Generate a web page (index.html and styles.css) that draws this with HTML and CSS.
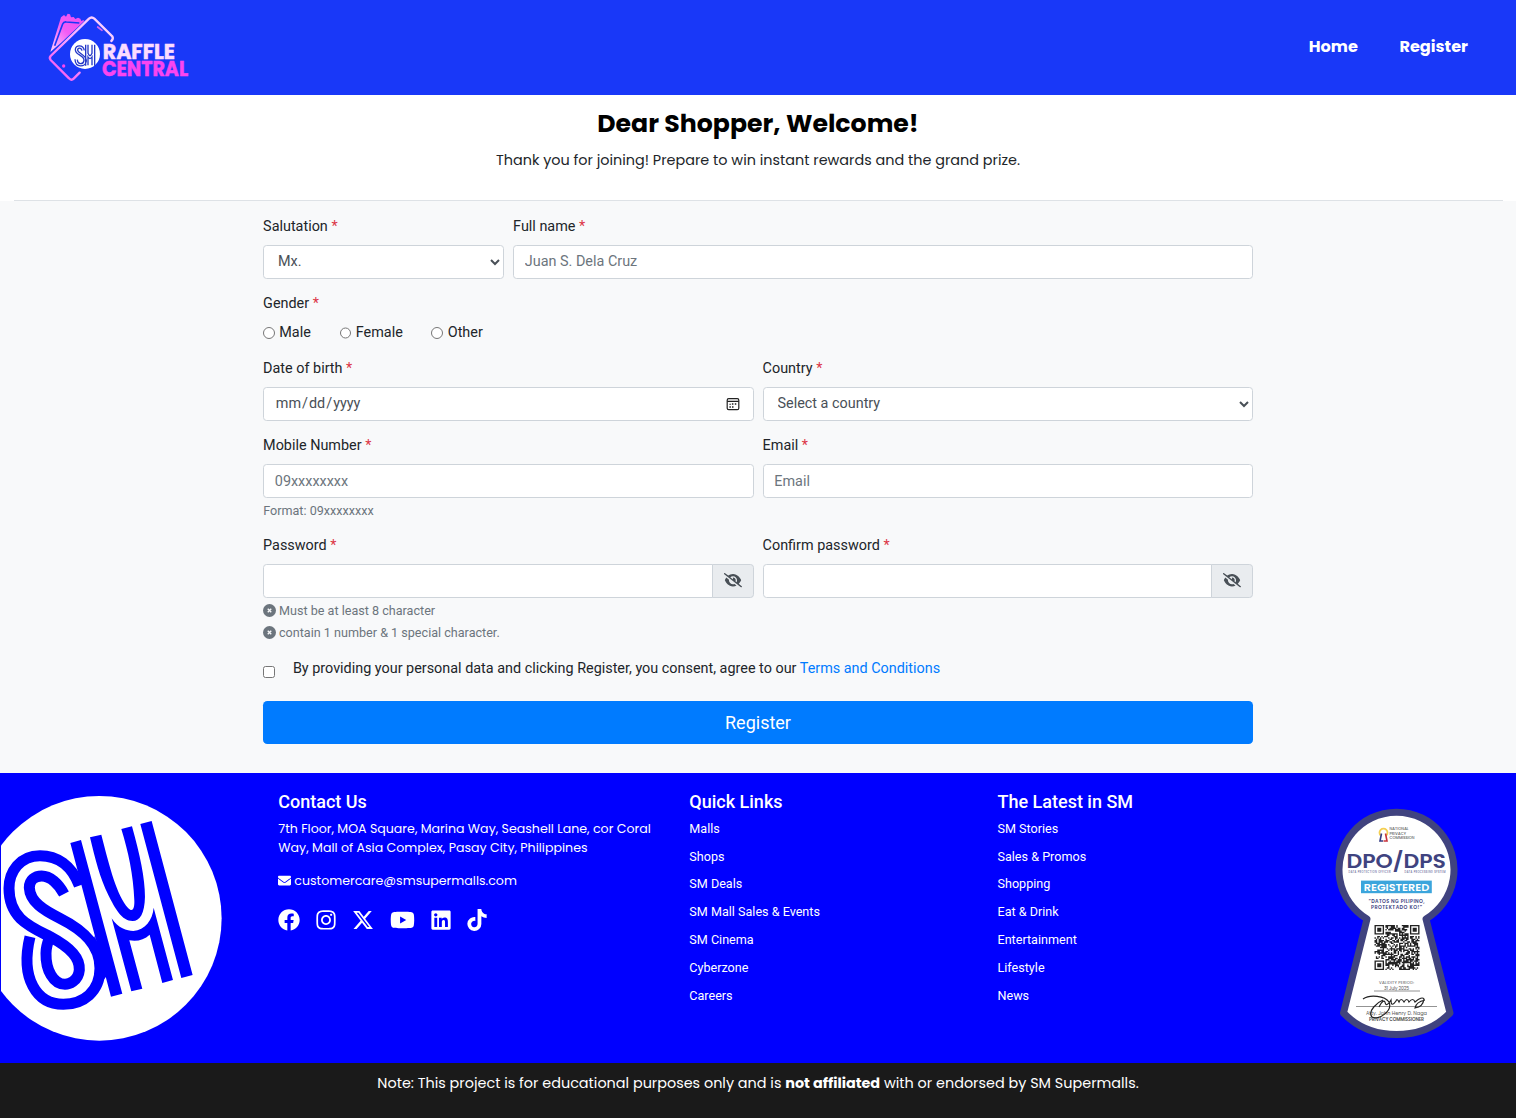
FILE: index.html
```html
<!DOCTYPE html>
<html lang="en">
<head>
<meta charset="utf-8">
<title>SM Raffle Central - Register</title>
<link rel="stylesheet" href="styles.css">
</head>
<body>
<svg class="defs" width="0" height="0">
  <symbol id="sm" viewBox="0 0 670 735">
    <g transform="translate(0 -33)">
      <path d="M211 174L243 165 367 626 333 635ZM421 117L455 108 578 570 544 579ZM270 157L304 149C330 250 350 330 385 370C400 385 404 365 403 345C400 270 385 200 364 132L396 124C420 210 435 280 435 335C434 385 420 408 398 408C365 408 345 370 325 330C300 280 285 220 270 157ZM335 400C355 430 380 438 400 438C435 435 458 405 461 368L519 585 487 594 449 449C432 465 412 470 388 466L427 611 394 619ZM284 452L318 575 300 600 280 470Z" fill="currentColor"/>
      <path d="M238 302C215 240 170 212 120 212C60 212 27 260 27 310C27 400 90 425 150 455C215 490 240 520 238 555C235 590 205 598 195 598C160 598 137 555 138 505C138 490 142 475 148 460M192 327C175 295 150 273 125 273C105 273 88 285 88 308C90 350 130 375 180 400C250 435 300 480 300 550C300 620 250 658 190 658C110 658 60 580 90 455" fill="none" stroke="currentColor" stroke-width="33"/>
    </g>
  </symbol>
  <symbol id="eye" viewBox="0 0 640 512"><path fill="currentColor" d="M38.800 5.100C28.400-3.100 13.300-1.200 5.100 9.200S-1.200 34.700 9.200 42.900l592 464c10.400 8.200 25.500 6.300 33.700-4.100s6.300-25.500-4.100-33.700L525.600 386.700c39.600-40.600 66.400-86.100 79.900-118.400c3.300-7.900 3.300-16.700 0-24.600c-14.900-35.700-46.200-87.700-93-131.100C465.500 68.800 400.800 32 320 32c-68.200 0-125 26.300-169.300 60.800L38.800 5.100zM223.100 149.500C248.600 126.200 282.700 112 320 112c79.500 0 144 64.500 144 144c0 24.900-6.300 48.300-17.400 68.700L408 294.500c8.400-19.300 10.600-41.400 4.800-63.300c-11.100-41.500-47.800-69.400-88.600-71.100c-5.800-.2-9.200 6.100-7.400 11.700c2.100 6.400 3.300 13.200 3.300 20.300c0 10.200-2.400 19.800-6.600 28.300l-90.300-70.800zM373 389.900c-16.400 6.500-34.300 10.100-53 10.100c-79.500 0-144-64.500-144-144c0-6.900 .5-13.600 1.400-20.200L83.100 161.500C60.300 191.200 44 220.800 34.500 243.700c-3.300 7.900-3.300 16.700 0 24.600c14.900 35.700 46.200 87.700 93 131.100C174.500 443.200 239.200 480 320 480c47.800 0 89.900-12.900 126.200-32.500L373 389.900z"/></symbol>
  <symbol id="cross" viewBox="0 0 26 26"><circle cx="13" cy="13" r="13" fill="currentColor"/><path d="M9.500 9.500l7 7m0-7l-7 7" stroke="#f8f9fa" stroke-width="2.800"/></symbol>
</svg>

<header class="header">
  <svg class="brand" viewBox="0 0 480 255" role="img" aria-label="SM Raffle Central">
    <defs><linearGradient id="pink" x1="0" y1="1" x2="1" y2="0"><stop offset="0" stop-color="#fa45f0"/><stop offset=".45" stop-color="#f7a3ff"/><stop offset="1" stop-color="#fbe0ff"/></linearGradient>
    <linearGradient id="hot" x1="0" y1="1" x2="1" y2="0"><stop offset="0" stop-color="#ffd0ff"/><stop offset=".5" stop-color="#f25cf5"/><stop offset="1" stop-color="#ee4df2"/></linearGradient></defs>
    <path d="M31 141L63 37l9-7 6 5 5-9 7 2 3 9 8-1 5 6 8-4 7 3 3 7 7-3 1 4L65 112Z" fill="url(#hot)"/>
    <path d="M44 122L68 57q3-7 11-6l39 3" fill="none" stroke="#1938f8" stroke-width="5"/>
    <path d="M119 203L101 221Q94 228 87 220L32 165Q27 159 32 153L147 41Q155 34 163 41L217 94Q221 102 214 108" fill="none" stroke="url(#pink)" stroke-width="7" stroke-linecap="round"/>
    <path d="M173 66l13 10" stroke="#d667ef" stroke-width="5" stroke-linecap="round"/><circle cx="71" cy="183" r="5" fill="#fa45f0"/>
    <circle cx="135" cy="147" r="45" fill="#fff"/>
    <g fill="none" stroke="#2438c8" stroke-width="4">
      <path d="M133 136C129 118 106 119 106 134C106 151 133 150 132 166C130 180 113 179 112 164M126 137C123 126 112 128 113 136C115 146 140 149 139 168C137 187 106 190 105 163M137 119v63M144 119v26q6 14 12 0v-26M144 181v-25q6 9 12 0v25M164 119v63"/>
    </g>
    <g class="brand-text"><text x="188" y="161" textLength="217" lengthAdjust="spacingAndGlyphs" fill="#fbdcff" stroke="#fbdcff">RAFFLE</text><text x="186" y="212" textLength="258" lengthAdjust="spacingAndGlyphs" fill="#fa45f0" stroke="#fa45f0">CENTRAL</text></g>
  </svg>
  <nav class="nav"><a href="#">Home</a><a href="#">Register</a></nav>
</header>

<section class="welcome">
  <h1>Dear Shopper, Welcome!</h1>
  <p>Thank you for joining! Prepare to win instant rewards and the grand prize.</p>
  <div class="rule"></div>
</section>

<main class="main">
  <form class="form">
    <div class="row salutation">
      <div class="group"><label>Salutation <b>*</b></label><select class="control"><option>Mx.</option></select></div>
      <div class="group"><label>Full name <b>*</b></label><input class="control" placeholder="Juan S. Dela Cruz"></div>
    </div>
    <div class="group"><label>Gender <b>*</b></label>
      <div class="radios">
        <span><input type="radio" name="g">Male</span><span><input type="radio" name="g">Female</span><span><input type="radio" name="g">Other</span>
      </div>
    </div>
    <div class="row">
      <div class="group"><label>Date of birth <b>*</b></label><input class="control" type="date"></div>
      <div class="group"><label>Country <b>*</b></label><select class="control"><option>Select a country</option></select></div>
    </div>
    <div class="row">
      <div class="group"><label>Mobile Number <b>*</b></label><input class="control low" placeholder="09xxxxxxxx"><small>Format: 09xxxxxxxx</small></div>
      <div class="group"><label>Email <b>*</b></label><input class="control low" placeholder="Email"></div>
    </div>
    <div class="row">
      <div class="group"><label>Password <b>*</b></label>
        <div class="input-group"><input class="control" type="password"><span class="addon"><svg><use href="#eye"/></svg></span></div>
        <div class="hints"><div><svg><use href="#cross"/></svg>Must be at least 8 character</div><div><svg><use href="#cross"/></svg>contain 1 number &amp; 1 special character.</div></div>
      </div>
      <div class="group"><label>Confirm password <b>*</b></label>
        <div class="input-group"><input class="control" type="password"><span class="addon"><svg><use href="#eye"/></svg></span></div>
      </div>
    </div>
    <div class="consent"><input type="checkbox"><span>By providing your personal data and clicking Register, you consent, agree to our <a href="#">Terms and Conditions</a></span></div>
    <button class="submit" type="button">Register</button>
  </form>
</main>

<footer class="footer">
  <div class="sm-mark">
    <svg viewBox="3 0 670 735" role="img" aria-label="SM"><circle cx="298" cy="367" r="367" fill="#fff"/><use href="#sm" width="670" height="735"/></svg>
  </div>
  <div class="contact">
    <h2>Contact Us</h2>
    <p>7th Floor, MOA Square, Marina Way, Seashell Lane, cor Coral<br>Way, Mall of Asia Complex, Pasay City, Philippines</p>
    <p class="mail"><svg viewBox="0 0 512 512"><path fill="#fff" d="M502.3 190.8c3.9-3.1 9.7-.2 9.7 4.7V400c0 26.5-21.5 48-48 48H48c-26.5 0-48-21.5-48-48V195.6c0-5 5.7-7.8 9.7-4.7 22.4 17.4 52.1 39.5 154.1 113.6 21.1 15.4 56.7 47.8 92.2 47.6 35.7.3 72-32.8 92.3-47.6 102-74.1 131.6-96.3 154-113.7zM256 320c23.2.4 56.6-29.2 73.4-41.4 132.7-96.3 142.8-104.7 173.4-128.7 5.8-4.5 9.2-11.5 9.2-18.9v-19c0-26.5-21.5-48-48-48H48c-26.5 0-48 21.5-48 48v19c0 7.4 3.4 14.3 9.2 18.9 30.6 23.9 40.7 32.4 173.4 128.7 16.8 12.2 50.2 41.8 73.4 41.4z"/></svg><span>customercare@smsupermalls.com</span></p>
    <div class="social">
      <svg viewBox="0 0 512 512" width="22"><path d="M504 256C504 119 393 8 256 8S8 119 8 256c0 123.780 90.690 226.380 209.250 245V327.690h-63V256h63v-54.640c0-62.150 37-96.480 93.670-96.480 27.140 0 55.520 4.840 55.520 4.840v61h-31.280c-30.800 0-40.410 19.120-40.410 38.730V256h68.780l-11 71.690h-57.780V501C413.310 482.380 504 379.780 504 256z"/></svg>
      <svg viewBox="0 0 448 512" width="20"><path d="M224.100 141c-63.600 0-114.900 51.300-114.900 114.900s51.300 114.900 114.900 114.900S339 319.500 339 255.900 287.700 141 224.100 141zm0 189.600c-41.100 0-74.700-33.500-74.700-74.700s33.500-74.700 74.700-74.700 74.700 33.500 74.700 74.700-33.600 74.700-74.700 74.700zm146.400-194.300c0 14.900-12 26.800-26.800 26.800-14.900 0-26.800-12-26.800-26.800s12-26.800 26.800-26.800 26.800 12 26.800 26.800zm76.100 27.200c-1.700-35.900-9.900-67.700-36.200-93.900-26.200-26.200-58-34.400-93.900-36.200-37-2.100-147.900-2.100-184.900 0-35.800 1.700-67.600 9.900-93.900 36.100s-34.400 58-36.200 93.900c-2.100 37-2.100 147.900 0 184.900 1.700 35.900 9.900 67.700 36.200 93.900s58 34.400 93.900 36.200c37 2.100 147.900 2.100 184.900 0 35.900-1.700 67.700-9.900 93.900-36.200 26.200-26.200 34.400-58 36.200-93.900 2.100-37 2.100-147.800 0-184.800zM398.800 388c-7.800 19.600-22.900 34.700-42.600 42.600-29.500 11.700-99.500 9-132.100 9s-102.700 2.600-132.100-9c-19.600-7.800-34.700-22.900-42.600-42.600-11.700-29.500-9-99.500-9-132.100s-2.600-102.700 9-132.100c7.800-19.600 22.900-34.700 42.600-42.600 29.500-11.700 99.500-9 132.100-9s102.700-2.600 132.100 9c19.600 7.800 34.700 22.900 42.600 42.600 11.700 29.500 9 99.500 9 132.100s2.700 102.700-9 132.100z"/></svg>
      <svg viewBox="0 0 512 512" width="22"><path d="M389.200 48h70.600L305.600 224.200 487 464H345L233.700 318.600 106.500 464H35.800L200.700 275.500 26.800 48H172.400L272.900 180.900 389.200 48zM364.400 421.800h39.100L151.100 88h-42L364.400 421.800z"/></svg>
      <svg viewBox="0 0 576 512" width="25"><path d="M549.655 124.083c-6.281-23.650-24.787-42.276-48.284-48.597C458.781 64 288 64 288 64S117.220 64 74.629 75.486c-23.497 6.322-42.003 24.947-48.284 48.597-11.412 42.867-11.412 132.305-11.412 132.305s0 89.438 11.412 132.305c6.281 23.650 24.787 41.500 48.284 47.821C117.220 448 288 448 288 448s170.780 0 213.371-11.486c23.497-6.321 42.003-24.171 48.284-47.821 11.412-42.867 11.412-132.305 11.412-132.305s0-89.438-11.412-132.305zm-317.510 213.508V175.185l142.739 81.205-142.739 81.201z"/></svg>
      <svg viewBox="0 0 448 512" width="20"><path d="M416 32H31.900C14.300 32 0 46.500 0 64.300v383.400C0 465.500 14.300 480 31.900 480H416c17.600 0 32-14.500 32-32.300V64.300c0-17.800-14.400-32.300-32-32.300zM135.400 416H69V202.200h66.500V416zm-33.200-243c-21.300 0-38.500-17.300-38.500-38.500S80.900 96 102.200 96c21.200 0 38.500 17.300 38.500 38.500 0 21.300-17.200 38.500-38.500 38.500zm282.100 243h-66.400V312c0-24.800-.5-56.700-34.500-56.700-34.600 0-39.900 27-39.900 54.900V416h-66.400V202.200h63.700v29.200h.9c8.900-16.800 30.600-34.500 62.900-34.500 67.200 0 79.700 44.300 79.700 101.900V416z"/></svg>
      <svg viewBox="0 0 448 512" width="20"><path d="M448 209.910a210.060 210.060 0 0 1-122.770-39.250V349.380A162.550 162.550 0 1 1 185 188.310V278.200a74.620 74.620 0 1 0 52.230 71.180V0h88a121.180 121.180 0 0 0 1.860 22.170A122.180 122.180 0 0 0 381 102.390a121.430 121.430 0 0 0 67 20.140z"/></svg>
    </div>
  </div>
  <div class="links"><h2>Quick Links</h2><a>Malls</a><a>Shops</a><a>SM Deals</a><a>SM Mall Sales &amp; Events</a><a>SM Cinema</a><a>Cyberzone</a><a>Careers</a></div>
  <div class="links"><h2>The Latest in SM</h2><a>SM Stories</a><a>Sales &amp; Promos</a><a>Shopping</a><a>Eat &amp; Drink</a><a>Entertainment</a><a>Lifestyle</a><a>News</a></div>
  <svg class="seal" viewBox="0 0 125 230" role="img" aria-label="DPO/DPS Registered">
    <path d="M32 110A57.500 57.500 0 1 1 91 110L115 204Q94 225.500 61.500 225.500Q29 225.500 8.500 204Z" fill="#fff" stroke="#40437f" stroke-width="7" stroke-linejoin="round"/>
    <path d="M45.800 26.500a4 4 0 1 1 5.400 0" fill="none" stroke="#f4cf52" stroke-width="1.800"/><path d="M46.500 24.500L45 32h3" fill="none" stroke="#343b83" stroke-width="1.600"/><path d="M50.500 24.500l1.500 7.500h-3.500" fill="none" stroke="#c7333d" stroke-width="1.600"/>
    <g class="seal-text" fill="#40437f">
      <g fill="#333" font-size="3.800"><text x="54.500" y="21" textLength="19">NATIONAL</text><text x="54.500" y="25.600" textLength="16.500">PRIVACY</text><text x="54.500" y="30.200" textLength="25">COMMISSION</text></g>
      <text x="11.500" y="58.800" font-size="20" textLength="99.500" lengthAdjust="spacingAndGlyphs" font-weight="600">DPO/DPS</text>
      <g font-size="2.600"><text x="13.500" y="63.800" textLength="42">DATA PROTECTION OFFICER</text><text x="69.500" y="63.800" textLength="41">DATA PROCESSING SYSTEM</text></g>
      <rect x="26" y="71.600" width="70.800" height="12.600" fill="#3ba5dc"/><text x="28.800" y="81.800" font-size="10.800" fill="#fff" font-weight="600" textLength="65.500" lengthAdjust="spacingAndGlyphs">REGISTERED</text>
      <g font-size="4.900" font-weight="600"><text x="33.500" y="94" textLength="56">“DATOS NG PILIPINO,</text><text x="36" y="100" textLength="51">PROTEKTADO KO!”</text></g>
      <g fill="#555" font-size="4"><text x="44" y="174.500" textLength="35">VALIDITY PERIOD:</text><text x="49" y="180.500" font-size="4.500" textLength="25">31 July 2025</text><text x="31" y="206.300" font-size="5" textLength="61">Atty. John Henry D. Naga</text><text x="34" y="211.500" font-size="4.600" font-weight="600" textLength="55">PRIVACY COMMISSIONER</text></g>
    </g>
    <path d="M39 182h46M21 197.500h81" stroke="#777" stroke-width=".8"/>
    <path id="qr" fill="#222"/>
    <path d="M28 190C35 185 50 187 54 193C58 202 43 212 37 208C32 202 43 193 48 191M44 198q4-8 6-5q1 6 6-2q0 8 5 1q1-3 3 1q2-5 5 0q3-5 5 0q4-5 6 0q7-6 9-3q-1 8-9 9q1-6 10-8" fill="none" stroke="#222" stroke-width="1.200"/>
  </svg>
</footer>
<div class="note">Note: This project is for educational purposes only and is <strong>not affiliated</strong> with or endorsed by SM Supermalls.</div>
<script src="qr.js"></script>
</body>
</html>
```
FILE: styles.css
```css
* { box-sizing: border-box; }
body { margin: 0; width: 1516px; background: #fff; color: #212529; font: 14.4px/21.6px Roboto, sans-serif; }
a { color: #007bff; text-decoration: none; }
.defs { position: absolute; }
.header { height: 95px; background: #1938f8; padding: 5px 48px 0 40px; display: flex; justify-content: space-between; }
.brand { width: 160px; height: 85px; }
.brand-text { font: 700 62px Poppins, Lato, sans-serif; stroke-width: 1.5; }
.nav { display: flex; gap: 41.5px; padding-top: 30px; font: 700 16.15px/24px Poppins, Inter, sans-serif; }
.nav a { color: #fff; }
.welcome { height: 106px; padding: 12px 14px 0; text-align: center; font-family: Poppins, Inter, sans-serif; display: flex; flex-direction: column; }
.welcome h1 { margin: 0; color: #000; font-size: 25.2px; line-height: 33px; font-weight: 700; }
.welcome p { margin: 10px 0 0; }
.rule { height: 1px; margin: auto -1px 0 0; background: #dee2e6; }
.main { height: 572px; background: #f8f9fa; padding-top: 15px; }
.form { width: 990px; margin: 0 auto; }
.row { display: grid; grid-template-columns: 1fr 1fr; gap: 9px; }
.salutation { grid-template-columns: 241px 1fr; }
.group { padding-bottom: 14.3px; }
label { display: block; height: 28.8px; line-height: 21.6px; padding-left: .1px; }
label b { color: #dc3545; font-weight: 400; }
.control { display: block; width: 100%; height: 34.2px; margin: 0; padding: 5.4px 10.8px; border: 1px solid #ced4da; border-radius: 3.6px; background: #fff; color: #495057; font: 14.4px/21.6px Roboto, sans-serif; }
select.control { padding-left: 10px; }
.control.low { padding-top: 5.8px; padding-bottom: 5px; }
.control::placeholder { color: #6c757d; opacity: 1; }
.control::-webkit-calendar-picker-indicator { background: url("data:image/svg+xml,%3Csvg xmlns='http://www.w3.org/2000/svg' viewBox='0 0 14 14'%3E%3Crect x='1.2' y='1.7' width='11.6' height='11' rx='1.5' fill='none' stroke='%23222' stroke-width='1.2'/%3E%3Cpath d='M1.2 4.3h11.6' stroke='%23222' stroke-width='1.3'/%3E%3Cpath d='M5.9 6.2h1.5v1.5H5.9zM8.8 6.2h1.5v1.5H8.8zM3.4 9.2h1.5v1.5H3.4zM6 9.2h1.5v1.5H6zM3.4 6.7h1.5v1H3.4z' fill='%23222'/%3E%3C/svg%3E") center / 14px 14px no-repeat; }
.radios { display: flex; gap: 28.7px; height: 21.6px; line-height: 21.6px; }
.radios span { display: flex; }
.radios input { width: 11.7px; height: 11.7px; margin: 5px 4.6px 0 0; }
small { display: block; margin-top: 3.6px; padding-left: .2px; font-size: 12.6px; line-height: 18.9px; color: #6c757d; }
.input-group { display: flex; }
.input-group .control { border-radius: 3.6px 0 0 3.6px; }
.addon { flex: 0 0 42px; margin-left: -1px; padding-bottom: 1px; display: grid; place-items: center; border: 1px solid #ced4da; border-radius: 0 3.6px 3.6px 0; background: #e9ecef; color: #495057; }
.addon svg { width: 18px; height: 14.4px; }
.hints { font-size: 12.6px; line-height: 22px; color: #6c757d; padding-top: 1.5px; }
.hints div { display: flex; align-items: center; gap: 3px; }
.hints svg { width: 13px; height: 13px; }
.consent { display: flex; height: 43px; }
.consent input { width: 11.7px; height: 11.7px; margin: 8px 18.2px 0 0; }
.submit { display: block; width: 100%; height: 43px; border: 0; border-radius: 4.3px; background: #007bff; color: #fff; font: 18px/27px Roboto, sans-serif; }
.footer { height: 290px; background: #00f; color: #fff; display: grid; grid-template-columns: 278.3px 411px 308.2px 337.5px 125px; align-items: start; }
.sm-mark { padding: 23px 0 0 1px; color: #00f; }
.sm-mark svg { display: block; width: 223.3px; height: 245px; }
h2 { margin: 0 0 6px; font-size: 18px; line-height: 22px; font-weight: 500; }
.contact, .links { padding-top: 18px; }
.contact p { font-family: Poppins, Inter, sans-serif; font-size: 12.6px; line-height: 19px; margin: 0; }
.contact .mail { display: flex; align-items: center; gap: 3px; margin-top: 14px; }
.mail svg { width: 13px; height: 13px; }
.social { display: flex; align-items: center; margin-top: 19px; gap: 15.9px; }
.social svg { height: 22px; fill: #fff; }
.links { display: flex; flex-direction: column; }
.links a { color: #fff; font-size: 12.6px; line-height: 18.9px; margin-bottom: 8.95px; }
.links h2 { margin-bottom: 6.8px; }
.seal { width: 125px; height: 230px; margin-top: 36px; overflow: visible; }
.seal-text { font-family: Poppins, Inter, sans-serif; }
.note { height: 55px; background: #1a1a1a; color: #fff; padding-top: 10px; text-align: center; font-family: Poppins, Inter, sans-serif; }
```
FILE: qr.js
```js
// Fills the seal's code block with square modules and three finder marks.
(function () {
  var n = 33, u = 45 / n, d = '', s = 77;
  function finder(x, y) {
    var corners = [[0, 0], [n - 7, 0], [0, n - 7]];
    for (var i = 0; i < 3; i++) {
      var a = x - corners[i][0], b = y - corners[i][1];
      if (a >= -1 && b >= -1 && a <= 7 && b <= 7) {
        var r = Math.max(Math.abs(a - 3), Math.abs(b - 3));
        return r === 3 || r < 2 ? 1 : 0;
      }
    }
    return -1;
  }
  for (var y = 0; y < n; y++) for (var x = 0; x < n; x++) {
    s = (s * 1103515245 + 12345) % 2147483648;
    var f = finder(x, y);
    if (f === 1 || (f < 0 && s / 2147483648 > 0.4)) {
      d += 'M' + (39.5 + x * u).toFixed(2) + ' ' + (116 + y * u).toFixed(2) + 'h' + u.toFixed(2) + 'v' + u.toFixed(2) + 'h-' + u.toFixed(2) + 'z';
    }
  }
  document.getElementById('qr').setAttribute('d', d);
})();
```
